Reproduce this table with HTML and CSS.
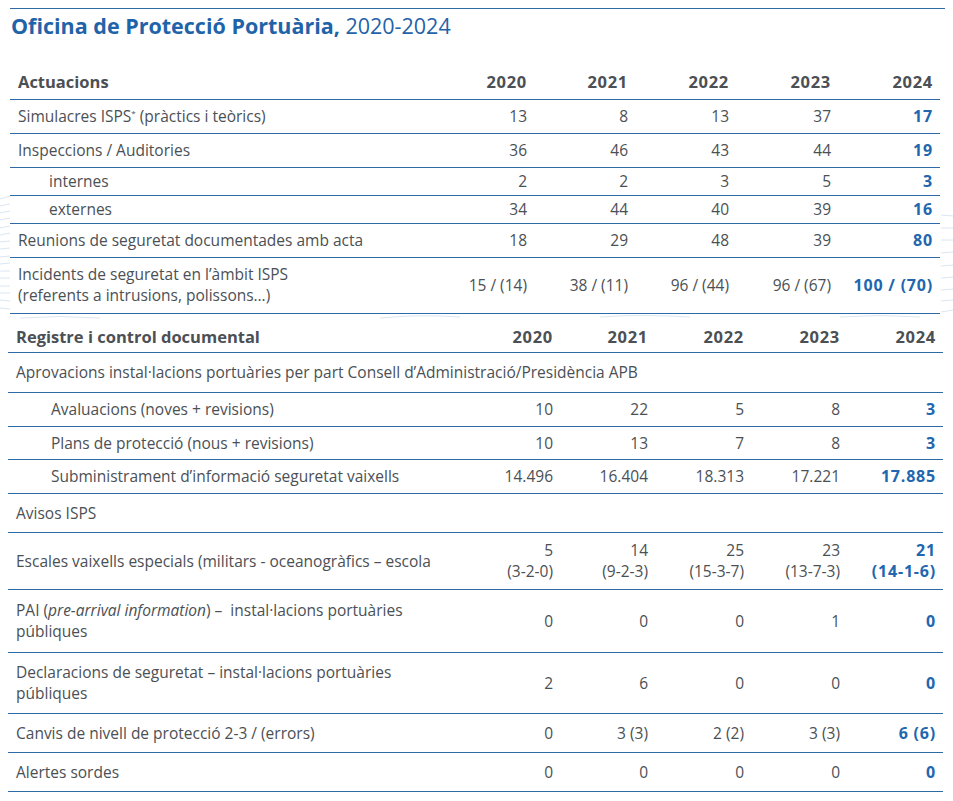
FILE: index.html
```html
<!DOCTYPE html>
<html lang="ca">
<head>
<meta charset="utf-8">
<title>Oficina de Protecció Portuària, 2020-2024</title>
<link rel="stylesheet" href="styles.css">
</head>
<body>
<div class="page">
  <svg class="watermark" width="953" height="801" viewBox="0 0 953 801" aria-hidden="true">
    <g stroke="#dbe6f1" stroke-width="1" fill="none">
      <path d="M0 199 L10 196"/><path d="M0 206 L10 204"/><path d="M0 213 L10 211"/>
      <path d="M0 220 L10 218"/><path d="M0 228 L10 226"/><path d="M0 235 L10 233"/>
      <path d="M0 242 L10 241"/><path d="M0 249 L10 248"/><path d="M0 257 L10 256"/>
      <path d="M0 264 L10 263"/><path d="M0 271 L10 271"/><path d="M0 278 L10 278"/>
      <path d="M0 286 L10 286"/><path d="M0 293 L10 293"/><path d="M0 300 L10 301"/>
      <path d="M0 308 L10 309"/>
      <path d="M941 215 L953 216"/><path d="M941 228 L953 228"/><path d="M941 240 L953 240"/>
      <path d="M941 253 L953 252"/><path d="M941 266 L953 265"/><path d="M941 278 L953 277"/>
      <path d="M941 290 L953 289"/><path d="M941 301 L953 300"/><path d="M941 312 L953 310"/>
      <path d="M20 318 Q60 315 100 318"/><path d="M380 318 Q420 314 460 317"/>
      <path d="M600 317 Q640 314 690 317"/><path d="M840 317 Q880 314 920 317"/>
    </g>
  </svg>

  <h1 class="title"><span class="title-strong">Oficina de Protecció Portuària,</span> 2020-2024</h1>

  <table class="data t1">
    <colgroup>
      <col class="c-label"><col class="c-y1"><col class="c-y2"><col class="c-y3"><col class="c-y4"><col class="c-y5">
    </colgroup>
    <thead>
      <tr class="h34"><th>Actuacions</th><th>2020</th><th>2021</th><th>2022</th><th>2023</th><th>2024</th></tr>
    </thead>
    <tbody>
      <tr class="h34"><td>Simulacres ISPS<sup>*</sup> (pràctics i teòrics)</td><td>13</td><td>8</td><td>13</td><td>37</td><td class="hl">17</td></tr>
      <tr class="h34"><td>Inspeccions / Auditories</td><td>36</td><td>46</td><td>43</td><td>44</td><td class="hl">19</td></tr>
      <tr class="h28"><td class="sub">internes</td><td>2</td><td>2</td><td>3</td><td>5</td><td class="hl">3</td></tr>
      <tr class="h28"><td class="sub">externes</td><td>34</td><td>44</td><td>40</td><td>39</td><td class="hl">16</td></tr>
      <tr class="h34"><td>Reunions de seguretat documentades amb acta</td><td>18</td><td>29</td><td>48</td><td>39</td><td class="hl">80</td></tr>
      <tr class="h56"><td>Incidents de seguretat en l’àmbit ISPS<br>(referents a intrusions, polissons…)</td><td>15 / (14)</td><td>38 / (11)</td><td>96 / (44)</td><td>96 / (67)</td><td class="hl">100 / (70)</td></tr>
    </tbody>
  </table>

  <table class="data t2">
    <colgroup>
      <col class="c-label"><col class="c-y1"><col class="c-y2"><col class="c-y3"><col class="c-y4"><col class="c-y5">
    </colgroup>
    <thead>
      <tr class="h33"><th>Registre i control documental</th><th>2020</th><th>2021</th><th>2022</th><th>2023</th><th>2024</th></tr>
    </thead>
    <tbody>
      <tr class="h40"><td colspan="6">Aprovacions instal·lacions portuàries per part Consell d’Administració/Presidència APB</td></tr>
      <tr class="h34"><td class="sub2">Avaluacions (noves + revisions)</td><td>10</td><td>22</td><td>5</td><td>8</td><td class="hl">3</td></tr>
      <tr class="h33"><td class="sub2">Plans de protecció (nous + revisions)</td><td>10</td><td>13</td><td>7</td><td>8</td><td class="hl">3</td></tr>
      <tr class="h34"><td class="sub2">Subministrament d’informació seguretat vaixells</td><td>14.496</td><td>16.404</td><td>18.313</td><td>17.221</td><td class="hl">17.885</td></tr>
      <tr class="h39"><td colspan="6">Avisos ISPS</td></tr>
      <tr class="h57"><td>Escales vaixells especials (militars - oceanogràfics – escola</td><td>5<br>(3-2-0)</td><td>14<br>(9-2-3)</td><td>25<br>(15-3-7)</td><td>23<br>(13-7-3)</td><td class="hl">21<br>(14-1-6)</td></tr>
      <tr class="h63"><td>PAI (<em>pre-arrival information</em>) –&nbsp; instal·lacions portuàries<br>públiques</td><td>0</td><td>0</td><td>0</td><td>1</td><td class="hl">0</td></tr>
      <tr class="h61"><td>Declaracions de seguretat – instal·lacions portuàries<br>públiques</td><td>2</td><td>6</td><td>0</td><td>0</td><td class="hl">0</td></tr>
      <tr class="h39"><td>Canvis de nivell de protecció 2-3 / (errors)</td><td>0</td><td>3 (3)</td><td>2 (2)</td><td>3 (3)</td><td class="hl">6 (6)</td></tr>
      <tr class="h39"><td>Alertes sordes</td><td>0</td><td>0</td><td>0</td><td>0</td><td class="hl">0</td></tr>
    </tbody>
  </table>
</div>
</body>
</html>
```

FILE: styles.css
```css
* { box-sizing: border-box; }

html, body {
  margin: 0;
  padding: 0;
  background: #ffffff;
}

body {
  font-family: "Open Sans", "Noto Sans", "DejaVu Sans", sans-serif;
  color: #4b5055;
  font-size: 15.5px;
  font-variant-ligatures: none;
  font-feature-settings: "locl" 0, "liga" 0;
}

.page {
  position: relative;
  padding-top: 8px;
  width: 953px;
  height: 801px;
  overflow: hidden;
}

/* faint globe watermark that lies behind the tables */
.watermark {
  position: absolute;
  left: 0;
  top: 0;
  z-index: 0;
}

.title,
.data {
  position: relative;
  z-index: 1;
}

.title {
  margin: 0 0 0 10px;
  width: 935px;
  border-top: 1px solid #2e6aa6;
  padding: 3px 0 0 1px;
  height: 57px;
  font-size: 21.5px;
  font-weight: 400;
  line-height: 28px;
  color: #1f63a8;
}

.title-strong {
  font-weight: 700;
}

.data {
  border-collapse: collapse;
  table-layout: fixed;
  background: #ffffff;
}

.data th,
.data td {
  padding: 0 7px 0 8px;
  vertical-align: middle;
  text-align: right;
  border-bottom: 1px solid #2e6aa6;
  line-height: 21px;
  white-space: nowrap;
}

.data th:first-child,
.data td:first-child {
  text-align: left;
}

.data th {
  font-weight: 700;
  font-size: 16.5px;
  color: #4b5055;
}

.data th + th {
  letter-spacing: 0.7px;
}

.data sup {
  font-size: 8px;
  line-height: 0;
  vertical-align: 6px;
}

.data .hl {
  color: #2166ae;
  font-weight: 700;
  font-size: 16px;
  letter-spacing: 0.8px;
}

.data .sub { padding-left: 39px; }
.data .sub2 { padding-left: 43px; }

/* table 1 geometry: x 10 -> 940 (col widths include the cell padding) */
.t1 {
  margin-left: 10px;
  width: 930px;
}
.t1 .c-label { width: 423px; }
.t1 .c-y1 { width: 101px; }
.t1 .c-y2 { width: 101px; }
.t1 .c-y3 { width: 101px; }
.t1 .c-y4 { width: 102px; }
.t1 .c-y5 { width: 102px; }

/* table 2 geometry: x 8 -> 943 */
.t2 {
  margin-left: 8px;
  margin-top: 6px;
  width: 935px;
}
.t2 .c-label { width: 457px; }
.t2 .c-y1 { width: 95px; }
.t2 .c-y2 { width: 95px; }
.t2 .c-y3 { width: 96px; }
.t2 .c-y4 { width: 96px; }
.t2 .c-y5 { width: 96px; }

.t2 th { vertical-align: bottom; padding-bottom: 5px; }

.h28 { height: 28px; }
.h33 { height: 33px; }
.h34 { height: 34px; }
.h39 { height: 39px; }
.h40 { height: 40px; }
.h56 { height: 56px; }
.h57 { height: 57px; }
.h61 { height: 61px; }
.h63 { height: 63px; }
```
